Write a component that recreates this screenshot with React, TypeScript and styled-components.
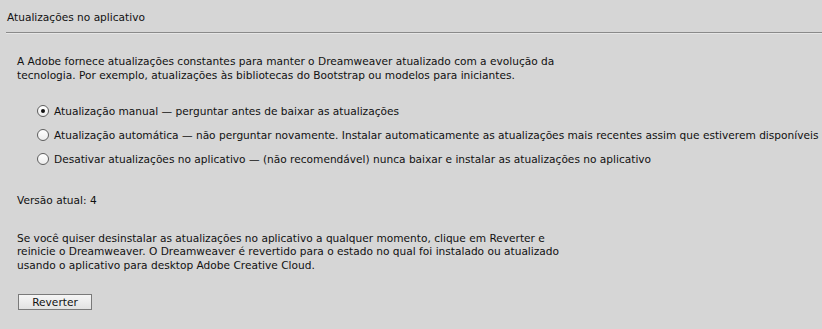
import React from "react";
import styled, { createGlobalStyle } from "styled-components";

const Global = createGlobalStyle`
  html, body { margin: 0; padding: 0; background: #d6d6d6; }
  body { font-family: "DejaVu Sans", "Liberation Sans", sans-serif; font-size: 10.6px; color: #111; }
`;

const Panel = styled.div`
  width: 822px;
  height: 329px;
  background: #d6d6d6;
  display: flex;
  flex-direction: column;
  overflow: hidden;
`;

const Title = styled.div`
  height: 32px;
  line-height: 14px;
  padding: 10px 0 0 7px;
  box-sizing: border-box;
`;

const Divider = styled.div`
  margin-left: 6px;
  height: 1px;
  background: #8a8a8a;
  border-bottom: 1px solid #e6e6e6;
`;

const Body = styled.div`
  padding: 0 0 0 17px;
  display: flex;
  flex-direction: column;
`;

const Para = styled.p<{ $top: number }>`
  margin: ${(p) => p.$top}px 0 0 0;
  line-height: 13.5px;
  white-space: nowrap;
`;

const Options = styled.div`
  display: flex;
  flex-direction: column;
  gap: 10px;
  margin: 22px 0 0 20px;
`;

const Option = styled.label`
  display: flex;
  align-items: center;
  gap: 5px;
  height: 14px;
  white-space: nowrap;
`;

const Radio = styled.span<{ $checked?: boolean }>`
  width: 10px;
  height: 10px;
  border-radius: 50%;
  border: 1px solid #5e5e5e;
  background: linear-gradient(#ffffff, #ececec);
  display: flex;
  align-items: center;
  justify-content: center;
  flex-shrink: 0;
  &::after {
    content: "";
    width: 4px;
    height: 4px;
    border-radius: 50%;
    background: ${(p) => (p.$checked ? "#111" : "transparent")};
  }
`;

const Button = styled.button`
  margin-top: 22px;
  width: 74px;
  height: 16px;
  padding: 0;
  font-family: inherit;
  font-size: 10.6px;
  color: #111;
  border: 1px solid #7a7a7a;
  background: linear-gradient(#f6f6f6, #e2e2e2);
  line-height: 14px;
  align-self: flex-start;
  margin-left: 1px;
`;

export default function App() {
  return (
    <Panel>
      <Global />
      <Title>Atualizações no aplicativo</Title>
      <Divider />
      <Body>
        <Para $top={21}>
          A Adobe fornece atualizações constantes para manter o Dreamweaver atualizado com a evolução da
          <br />
          tecnologia. Por exemplo, atualizações às bibliotecas do Bootstrap ou modelos para iniciantes.
        </Para>
        <Options>
          <Option>
            <Radio $checked />
            Atualização manual — perguntar antes de baixar as atualizações
          </Option>
          <Option>
            <Radio />
            Atualização automática — não perguntar novamente. Instalar automaticamente as atualizações mais recentes assim que estiverem disponíveis
          </Option>
          <Option>
            <Radio />
            Desativar atualizações no aplicativo — (não recomendável) nunca baixar e instalar as atualizações no aplicativo
          </Option>
        </Options>
        <Para $top={28}>Versão atual: 4</Para>
        <Para $top={24}>
          Se você quiser desinstalar as atualizações no aplicativo a qualquer momento, clique em Reverter e
          <br />
          reinicie o Dreamweaver. O Dreamweaver é revertido para o estado no qual foi instalado ou atualizado
          <br />
          usando o aplicativo para desktop Adobe Creative Cloud.
        </Para>
        <Button>Reverter</Button>
      </Body>
    </Panel>
  );
}
